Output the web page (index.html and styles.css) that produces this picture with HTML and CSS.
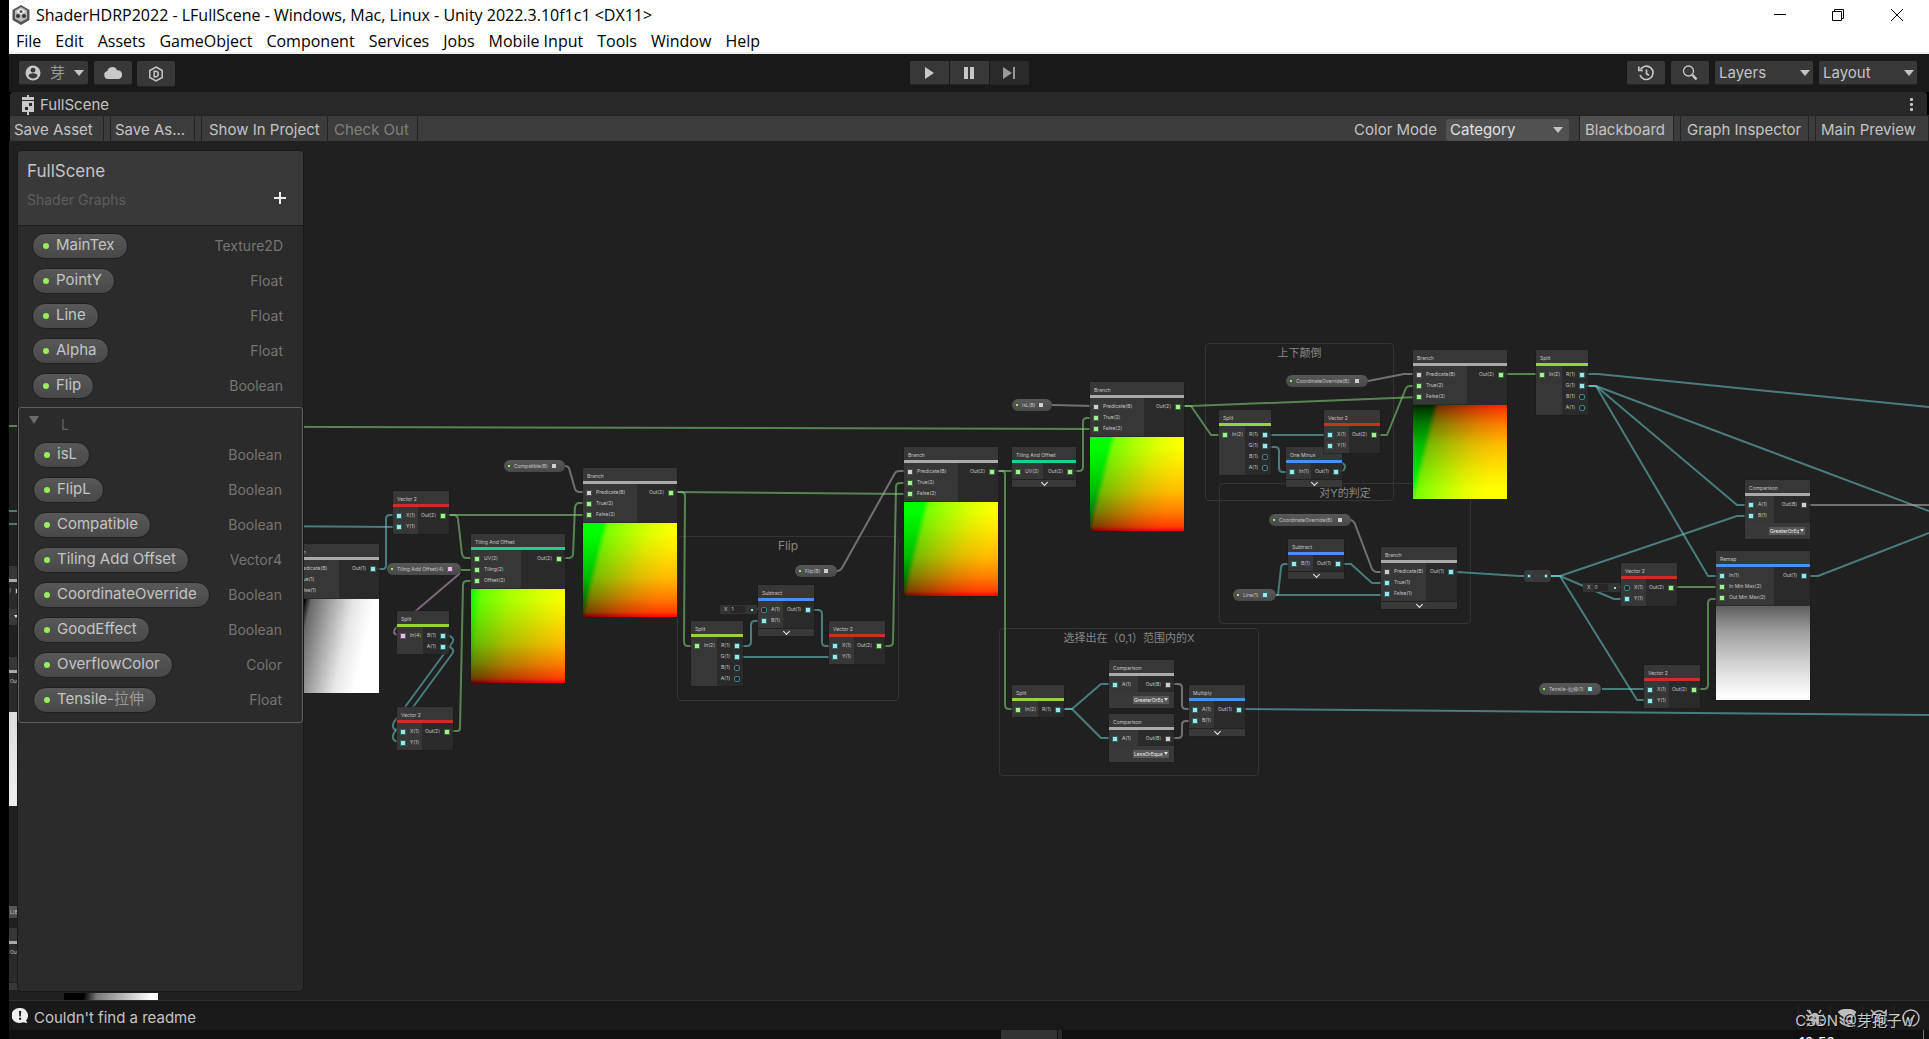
FILE: index.html
```html
<!DOCTYPE html>
<html lang="en">
<head>
<meta charset="utf-8">
<title>ShaderHDRP2022 - LFullScene - Unity</title>
<link rel="stylesheet" href="styles.css">
</head>
<body>
<header class="titlebar">
  <svg class="app-icon" viewBox="0 0 18 20"><path d="M9 0l8.500 5v10L9 20 .5 15V5z" fill="#555"/><path d="M9 2l6 3.500v8L9 17l-6-3.500v-8z" fill="#bbb"/><path d="M9 3.500l4.500 3L9 9.200 4.500 6.500z" fill="#f4f4f4"/><circle cx="6" cy="11" r="2" fill="#333"/><circle cx="12" cy="11" r="2" fill="#333"/><circle cx="9" cy="6.500" r="1.500" fill="#555"/></svg>
  <h1>ShaderHDRP2022 - LFullScene - Windows, Mac, Linux - Unity 2022.3.10f1c1 &lt;DX11&gt;</h1>
  <div class="window-buttons">
    <button aria-label="Minimize"><svg viewBox="0 0 12 12"><path d="M0 5.500h12"/></svg></button>
    <button aria-label="Restore"><svg viewBox="0 0 12 12"><path d="M.5 2.500h9v9h-9zM2.500 2.500v-2h9v9h-2"/></svg></button>
    <button aria-label="Close"><svg viewBox="0 0 12 12"><path d="M0 0l12 12M12 0L0 12"/></svg></button>
  </div>
</header>
<nav class="menubar">
  <button>File</button><button>Edit</button><button>Assets</button><button>GameObject</button><button>Component</button><button>Services</button><button>Jobs</button><button>Mobile Input</button><button>Tools</button><button>Window</button><button>Help</button>
</nav>

<div class="main-toolbar">
  <div class="tools">
    <button class="tool account"><svg class="ico" viewBox="0 0 16 16"><circle cx="8" cy="8" r="7.500" fill="#c8c8c8"/><circle cx="8" cy="5.200" r="2.400" fill="#383838"/><path d="M3.500 11c0-2 2-2.800 4.500-2.800s4.500.8 4.500 2.800c-1 1.500-2.600 2.400-4.500 2.400S4.500 12.500 3.500 11z" fill="#383838"/></svg><span>芽</span><i class="caret"></i></button>
    <button class="tool icon-tool" aria-label="Cloud"><svg class="cloud" viewBox="0 0 18 13"><path d="M4 13a4 4 0 0 1-.6-7.900A5 5 0 0 1 13 4.200 4.400 4.400 0 0 1 14.500 13z" fill="#c8c8c8"/></svg></button>
    <button class="tool icon-tool tall" aria-label="Version control"><svg class="ico" viewBox="0 0 16 16" fill="none" stroke="#c8c8c8" stroke-width="1.500"><path d="M8 1l6.200 3.500v7L8 15l-6.200-3.500v-7z"/><path d="M6.200 5.200h1.600c3.300 0 3.300 5.600 0 5.600H6.200z"/></svg></button>
  </div>
  <div class="play-tools">
    <button aria-label="Play"><svg viewBox="0 0 12 12"><path d="M2 0l9 6-9 6z"/></svg></button>
    <button aria-label="Pause"><svg viewBox="0 0 12 12"><path d="M1 0h4v12H1zM7 0h4v12H7z"/></svg></button>
    <button aria-label="Step" class="dim"><svg viewBox="0 0 12 12"><path d="M0 0l9 6-9 6zM10 0h2v12h-2z"/></svg></button>
  </div>
  <div class="tools right">
    <button class="tool icon-tool" aria-label="Undo history"><svg class="ico" viewBox="0 0 16 16" fill="none" stroke="#c8c8c8" stroke-width="1.600"><path d="M2.500 4.500A6.700 6.700 0 1 1 2 10"/><path d="M.8 1.500v4h4M8.500 4.500v4.200l2.500 1.500"/></svg></button>
    <button class="tool icon-tool" aria-label="Search"><svg class="ico" viewBox="0 0 16 16" fill="none" stroke="#c8c8c8" stroke-width="1.300"><circle cx="6.500" cy="6" r="5"/><path d="M10.500 10l4 4.500" stroke-width="2.600"/></svg></button>
    <span class="select"><select aria-label="Layers"><option>Layers</option></select></span>
    <span class="select"><select aria-label="Layout"><option>Layout</option></select></span>
  </div>
</div>

<div class="tabbar">
  <svg class="tab-icon" viewBox="0 0 14 20"><path d="M6 0h2v2h5v3H1V2h5zM1 6h12v11H8v3H6v-3H1z" fill="#c8c8c8"/><path d="M8 8h3v3H8zM4 12h3v3H4z" fill="#282828"/></svg>
  <h2>FullScene</h2>
  <button class="kebab" aria-label="Tab options"><i></i><i></i><i></i></button>
</div>

<div class="graph-toolbar">
  <button class="save">Save Asset</button><i class="spacer"></i><button class="save-as">Save As...</button><i class="spacer"></i><button class="show">Show In Project</button><button class="checkout" disabled>Check Out</button>
  <div class="graph-right">
    <label for="mode">Color Mode</label>
    <span class="select mode"><select id="mode"><option>Category</option></select></span>
    <button class="on">Blackboard</button><i class="spacer"></i><button class="inspector">Graph Inspector</button><i class="spacer"></i><button class="main-preview">Main Preview</button>
  </div>
</div>

<main class="canvas">
<div class="stage">
  <section class="group g-flip"><h3>Flip</h3></section>
  <section class="group g-updown"><h3>上下颠倒</h3></section>
  <section class="group g-judge"><h3>对Y的判定</h3></section>
  <section class="group g-range"><h3>选择出在（0,1）范围内的X</h3></section>

  <svg class="wires" width="1929" height="1039">
    <g class="w-green">
      <path d="M9 426L1096 429"/>
      <path d="M443 515H589"/>
      <path d="M449 515H454Q457 515 458 519L462 554Q463 558 466 558H477"/>
      <path d="M461 570H477"/>
      <path d="M448 731H457Q460 731 460 728L463 585Q463 581 467 581H477"/>
      <path d="M559 558H569Q572 558 573 555L575 507Q576 503 579 503H589"/>
      <path d="M672 492L909 494"/>
      <path d="M677 492H681Q685 492 685 496L684 642Q684 646 688 646H697"/>
      <path d="M879 646H889Q893 646 893 642L896 487Q896 483 900 483H909"/>
      <path d="M992 471H1018"/>
      <path d="M998 471H1002Q1005 471 1005 475V705Q1005 709 1009 709H1018"/>
      <path d="M1070 471H1079Q1083 471 1083 467V422Q1083 418 1087 418H1096"/>
      <path d="M1178 406H1191L1419 397"/>
      <path d="M1184 406H1191L1211 435H1225"/>
      <path d="M1375 435H1387L1406 388Q1407 386 1410 386H1419"/>
      <path d="M1501 374H1542"/>
      <path d="M1672 587H1722"/>
      <path d="M1694 689H1704Q1708 689 1708 685V603Q1708 599 1712 599H1722"/>
    </g>
    <g class="w-teal">
      <path d="M9 511H30M9 524L399 527"/>
      <path d="M373 569H383Q386 569 386 565V519Q386 515 390 515H399"/>
      <path d="M443 635C452 635 455 639 452 643L394 722C391 728 394 731 402 731"/>
      <path d="M443 646C452 646 455 650 452 654L394 733C391 739 394 742 402 742"/>
      <path d="M738 646H747Q751 646 751 642V625Q751 621 755 621H764"/>
      <path d="M738 657H835"/>
      <path d="M751 609H764"/>
      <path d="M808 610H818Q822 610 822 614V642Q822 646 826 646H835"/>
      <path d="M1265 435H1330"/>
      <path d="M1265 447H1275Q1279 447 1279 451V468Q1279 472 1283 472H1292"/>
      <path d="M1337 472C1346 472 1347 465 1342 463L1325 453C1320 450 1322 447 1330 447"/>
      <path d="M1583 374H1598L1929 407"/>
      <path d="M1583 386H1596L1929 511"/>
      <path d="M1583 386H1596L1737 505H1751"/>
      <path d="M1583 386H1596L1708 576H1722"/>
      <path d="M1276 595H1387"/>
      <path d="M1276 595H1278L1281 568Q1281 564 1285 564H1294"/>
      <path d="M1338 564H1351L1372 583H1387"/>
      <path d="M1451 572H1457L1520 576H1529"/>
      <path d="M1546 576H1560L1737 516H1751"/>
      <path d="M1546 576H1560L1614 599H1627"/>
      <path d="M1546 576H1560L1637 700H1649"/>
      <path d="M1614 587H1627"/>
      <path d="M1602 689H1650"/>
      <path d="M1804 576H1818L1929 533"/>
      <path d="M1239 709L1929 715"/>
      <path d="M1058 709H1072L1101 684H1115"/>
      <path d="M1058 709H1072L1101 738H1115"/>
    </g>
    <g class="w-grey">
      <path d="M565 466Q568 466 569 468L575 489Q576 492 580 492H589"/>
      <path d="M837 571Q840 571 842 568L895 473Q896 471 900 471H909"/>
      <path d="M1052 405L1095 406"/>
      <path d="M1368 381L1404 374H1419"/>
      <path d="M1350 520Q1353 520 1355 524L1372 569Q1374 572 1377 572H1387"/>
      <path d="M1804 505H1929"/>
      <path d="M1168 684H1178Q1182 684 1182 688V705Q1182 709 1186 709H1195"/>
      <path d="M1168 738H1178Q1182 738 1182 734V725Q1182 721 1186 721H1195"/>
    </g>
    <g class="w-pink"><path d="M455 569Q462 571 458 575L398 626Q392 631 395 634Q397 635 402 635"/></g>
  </svg>

  <article class="node compare n0 grey"><h4></h4><div class="ports"><ul class="in"></ul><ul class="out"><li class="b">3)</li><li></li></ul></div><div class="enum"></div></article>
  <article class="node branch n1 grey"><h4></h4><div class="ports"><ul class="in"></ul><ul class="out"><li class="t">Out(1)</li><li></li><li></li></ul></div><div class="preview mono"></div></article>
  <div class="pill p0"><span class="b">L(B)</span></div>
  <article class="node branch n2 grey"><h4></h4><div class="ports"><ul class="in"></ul><ul class="out"><li class="t">Out(1)</li><li></li><li></li></ul></div><div class="fold"></div></article>
  <div class="preview stray"></div>

  <article class="node branch n3 grey"><h4>Branch</h4><div class="ports"><ul class="in"><li class="b">Predicate(B)</li><li class="t">True(1)</li><li class="t">False(1)</li></ul><ul class="out"><li class="t">Out(1)</li></ul></div><div class="preview mono"></div></article>
  <article class="node vec n4 red"><h4>Vector 2</h4><div class="ports"><ul class="in"><li class="t">X(1)</li><li class="t">Y(1)</li></ul><ul class="out"><li class="v">Out(2)</li></ul></div></article>
  <article class="node tiling n5 mint"><h4>Tiling And Offset</h4><div class="ports"><ul class="in"><li class="v">UV(2)</li><li class="v">Tiling(2)</li><li class="v">Offset(2)</li></ul><ul class="out"><li class="v">Out(2)</li></ul></div><div class="preview uv-soft"></div></article>
  <article class="node branch n6 grey"><h4>Branch</h4><div class="ports"><ul class="in"><li class="b">Predicate(B)</li><li class="v">True(2)</li><li class="v">False(2)</li></ul><ul class="out"><li class="v">Out(2)</li></ul></div><div class="preview uv"></div></article>
  <article class="node split n7 lime"><h4>Split</h4><div class="ports"><ul class="in"><li class="p">In(4)</li></ul><ul class="out"><li class="t">B(1)</li><li class="t">A(1)</li></ul></div></article>
  <article class="node vec n8 red"><h4>Vector 2</h4><div class="ports"><ul class="in"><li class="t">X(1)</li><li class="t">Y(1)</li></ul><ul class="out"><li class="v">Out(2)</li></ul></div></article>
  <div class="pill p1"><span class="b">Compatible(B)</span></div>
  <div class="pill p2"><span class="p">Tiling Add Offset(4)</span></div>

  <article class="node split n9 lime"><h4>Split</h4><div class="ports"><ul class="in"><li class="v">In(2)</li></ul><ul class="out"><li class="t">R(1)</li><li class="t">G(1)</li><li class="t open">B(1)</li><li class="t open">A(1)</li></ul></div></article>
  <article class="node vec n10 blue"><h4>Subtract</h4><div class="ports"><ul class="in"><li class="t open">A(1)</li><li class="t">B(1)</li></ul><ul class="out"><li class="t">Out(1)</li></ul></div><div class="fold"></div></article>
  <label class="slot s1">X <input value="1"></label>
  <article class="node vec n11 red"><h4>Vector 2</h4><div class="ports"><ul class="in"><li class="t">X(1)</li><li class="t">Y(1)</li></ul><ul class="out"><li class="v">Out(2)</li></ul></div></article>
  <div class="pill p3"><span class="b">Flip(B)</span></div>
  <article class="node branch n12 grey"><h4>Branch</h4><div class="ports"><ul class="in"><li class="b">Predicate(B)</li><li class="v">True(2)</li><li class="v">False(2)</li></ul><ul class="out"><li class="v">Out(2)</li></ul></div><div class="preview uv"></div></article>

  <article class="node tiling-s n13 mint"><h4>Tiling And Offset</h4><div class="ports"><ul class="in"><li class="v">UV(2)</li></ul><ul class="out"><li class="v">Out(2)</li></ul></div><div class="fold"></div></article>
  <div class="pill p4"><span class="b">isL(B)</span></div>
  <article class="node branch n14 grey"><h4>Branch</h4><div class="ports"><ul class="in"><li class="b">Predicate(B)</li><li class="v">True(2)</li><li class="v">False(2)</li></ul><ul class="out"><li class="v">Out(2)</li></ul></div><div class="preview uv"></div></article>

  <div class="pill p5"><span class="b">CoordinateOverride(B)</span></div>
  <article class="node split n15 lime"><h4>Split</h4><div class="ports"><ul class="in"><li class="v">In(2)</li></ul><ul class="out"><li class="t">R(1)</li><li class="t">G(1)</li><li class="t open">B(1)</li><li class="t open">A(1)</li></ul></div></article>
  <article class="node vec n16 blue"><h4>One Minus</h4><div class="ports"><ul class="in"><li class="t">In(1)</li></ul><ul class="out"><li class="t">Out(1)</li></ul></div><div class="fold"></div></article>
  <article class="node vec n17 red"><h4>Vector 2</h4><div class="ports"><ul class="in"><li class="t">X(1)</li><li class="t">Y(1)</li></ul><ul class="out"><li class="v">Out(2)</li></ul></div></article>
  <article class="node branch n18 grey"><h4>Branch</h4><div class="ports"><ul class="in"><li class="b">Predicate(B)</li><li class="v">True(2)</li><li class="v">False(2)</li></ul><ul class="out"><li class="v">Out(2)</li></ul></div><div class="preview uv-down"></div></article>
  <article class="node split n19 lime"><h4>Split</h4><div class="ports"><ul class="in"><li class="v">In(2)</li></ul><ul class="out"><li class="t">R(1)</li><li class="t">G(1)</li><li class="t open">B(1)</li><li class="t open">A(1)</li></ul></div></article>

  <div class="pill p6"><span class="b">CoordinateOverride(B)</span></div>
  <article class="node vec n20 blue"><h4>Subtract</h4><div class="ports"><ul class="in"><li class="t">B(1)</li></ul><ul class="out"><li class="t">Out(1)</li></ul></div><div class="fold"></div></article>
  <div class="pill p7"><span class="t">Line(1)</span></div>
  <article class="node branch-s n21 grey"><h4>Branch</h4><div class="ports"><ul class="in"><li class="b">Predicate(B)</li><li class="t">True(1)</li><li class="t">False(1)</li></ul><ul class="out"><li class="t">Out(1)</li></ul></div><div class="fold"></div></article>
  <div class="redirect t"><i></i><i></i></div>

  <article class="node split n22 lime"><h4>Split</h4><div class="ports"><ul class="in"><li class="v">In(2)</li></ul><ul class="out"><li class="t">R(1)</li></ul></div></article>
  <article class="node compare n23 grey"><h4>Comparison</h4><div class="ports"><ul class="in"><li class="t">A(1)</li></ul><ul class="out"><li class="b">Out(B)</li></ul></div><div class="enum"><select aria-label="Operator"><option>GreaterOrEqual</option></select></div></article>
  <article class="node compare n24 grey"><h4>Comparison</h4><div class="ports"><ul class="in"><li class="t">A(1)</li></ul><ul class="out"><li class="b">Out(B)</li></ul></div><div class="enum"><select aria-label="Operator"><option>LessOrEqual</option></select></div></article>
  <article class="node vec n25 blue"><h4>Multiply</h4><div class="ports"><ul class="in"><li class="t">A(1)</li><li class="t">B(1)</li></ul><ul class="out"><li class="t">Out(1)</li></ul></div><div class="fold"></div></article>

  <label class="slot s2">X <input value="0"></label>
  <article class="node vec n26 red"><h4>Vector 2</h4><div class="ports"><ul class="in"><li class="t open">X(1)</li><li class="t">Y(1)</li></ul><ul class="out"><li class="v">Out(2)</li></ul></div></article>
  <article class="node compare n27 grey"><h4>Comparison</h4><div class="ports"><ul class="in"><li class="t">A(1)</li><li class="t">B(1)</li></ul><ul class="out"><li class="b">Out(B)</li></ul></div><div class="enum"><select aria-label="Operator"><option>GreaterOrEqual</option></select></div></article>
  <article class="node remap n28 blue"><h4>Remap</h4><div class="ports"><ul class="in"><li class="t">In(1)</li><li class="v">In Min Max(2)</li><li class="v">Out Min Max(2)</li></ul><ul class="out"><li class="t">Out(1)</li></ul></div><div class="preview ramp"></div></article>
  <article class="node vec n29 red"><h4>Vector 2</h4><div class="ports"><ul class="in"><li class="t">X(1)</li><li class="t">Y(1)</li></ul><ul class="out"><li class="v">Out(2)</li></ul></div></article>
  <div class="pill p8"><span class="t">Tensile-拉伸(1)</span></div>
</div>

<aside class="blackboard">
  <header><h2>FullScene</h2><div class="sub"><p>Shader Graphs</p><button aria-label="Add property"><svg viewBox="0 0 12 12"><path d="M6 0v12M0 6h12"/></svg></button></div></header>
  <ul class="props">
    <li><span class="prop">MainTex</span><em>Texture2D</em></li>
    <li><span class="prop">PointY</span><em>Float</em></li>
    <li><span class="prop">Line</span><em>Float</em></li>
    <li><span class="prop">Alpha</span><em>Float</em></li>
    <li><span class="prop">Flip</span><em>Boolean</em></li>
  </ul>
  <section class="category">
    <h3><i class="caret"></i>L</h3>
    <ul class="props">
      <li><span class="prop">isL</span><em>Boolean</em></li>
      <li><span class="prop">FlipL</span><em>Boolean</em></li>
      <li><span class="prop">Compatible</span><em>Boolean</em></li>
      <li><span class="prop">Tiling Add Offset</span><em>Vector4</em></li>
      <li><span class="prop">CoordinateOverride</span><em>Boolean</em></li>
      <li><span class="prop">GoodEffect</span><em>Boolean</em></li>
      <li><span class="prop">OverflowColor</span><em>Color</em></li>
      <li><span class="prop">Tensile-<b>拉伸</b></span><em>Float</em></li>
    </ul>
  </section>
</aside>
</main>

<footer class="status">
  <svg class="note" viewBox="0 0 16 16"><path d="M8 0a8 7.500 0 0 1 6 12.400L15.500 15 11 14.200A8 7.500 0 1 1 8 0z" fill="#f0f0f0"/><path d="M7 3h2.200L8.800 8.500H7.400zM7 9.800h2.200v2H7z" fill="#191919"/></svg>
  <p>Couldn't find a readme</p>
  <div class="status-icons">
    <button aria-label="Debug mode"><svg viewBox="0 0 18 18" fill="none" stroke="#bdbdbd" stroke-width="1.400"><ellipse cx="9" cy="10" rx="4" ry="5.500" fill="#bdbdbd"/><path d="M5 4l-2-3M13 4l2-3M4 8L0 6M14 8l4-2M4 11H0M14 11h4M4 14l-3 3M14 14l3 3M1 1l16 16"/></svg></button>
    <button aria-label="Cache server"><svg viewBox="0 0 18 18" fill="none" stroke="#bdbdbd" stroke-width="2"><path d="M1 3c4-3 12-3 16 0-1 4-3 5-6 5-5 0-8-2-10-5z" fill="#bdbdbd"/><path d="M2 8c1 4 9 5 13 3M2 12c2 4 8 5 11 3M12 12l5 5"/></svg></button>
    <button aria-label="Auto generate lighting"><svg viewBox="0 0 18 18" fill="none" stroke="#bdbdbd" stroke-width="1.600"><path d="M2 9a7 7 0 0 1 12-5l2-2v5h-5M16 9a7 7 0 0 1-12 5M1 1l16 16"/><circle cx="9" cy="9" r="3.500" fill="#8a8a8a"/></svg></button>
    <button aria-label="Background tasks"><svg viewBox="0 0 18 18" fill="none" stroke="#bdbdbd" stroke-width="1.400"><circle cx="9" cy="9" r="8"/><path d="M5.500 9.500l2.500 2.500 4.500-6"/></svg></button>
  </div>
  <span class="watermark">CSDN @芽孢子w</span>
</footer>
<div class="taskbar"><i class="task"></i><i class="task more"></i><time>10:50</time><i class="edge"></i></div>
</body>
</html>
```

FILE: styles.css
```css
* { box-sizing: border-box; margin: 0; padding: 0; }
body {
  display: flex; flex-direction: column; height: 100vh; padding-left: 9px; overflow: hidden;
  background: #000; color: #c4c4c4;
  font: 15px/18px Inter, "Noto Sans CJK SC", sans-serif;
}
button, select, input { font: inherit; color: inherit; background: none; border: 0; }
button { white-space: nowrap; }
h1, h2, h3, h4, em, b { font-weight: 400; font-style: normal; font-size: inherit; }
ul { list-style: none; }
svg { display: block; }
.caret { display: block; border: 5px solid transparent; border-top: 6px solid #c4c4c4; border-bottom: 0; }

/* window chrome */
.titlebar { display: flex; align-items: center; height: 29px; background: #fff; color: #000; padding-left: 3px; font: 16px/20px "Open Sans", sans-serif; flex: none; }
.app-icon { width: 18px; height: 20px; margin-right: 6px; }
.window-buttons { margin-left: auto; display: flex; }
.window-buttons button { width: 58px; height: 28px; display: grid; place-items: center; }
.window-buttons button:last-child { width: 60px; margin-right: 2px; }
.window-buttons svg { width: 12px; height: 12px; fill: none; stroke: #000; }
.menubar { display: flex; gap: 14px; height: 25px; padding: 0 7px; background: #fff; border-bottom: 2px solid #eceef0; color: #000; font: 16px/24px "Open Sans", sans-serif; flex: none; }

/* editor toolbar */
.main-toolbar { display: grid; grid-template-columns: 1fr auto 1fr; height: 38px; padding: 7px 12px 0 10px; background: #191919; flex: none; }
.tools { display: flex; gap: 6px; align-items: flex-start; }
.tools.right { justify-content: flex-end; }
.tool, .main-toolbar .select { height: 24px; background: #383838; border-radius: 2px; border-bottom: 1px solid #242424; }
.account { width: 69px; display: flex; align-items: center; padding: 0 4px 0 6px; }
.account span { margin: 0 auto; color: #999; }
.ico { width: 16px; height: 16px; }
.icon-tool { width: 38px; display: grid; place-items: center; }
.icon-tool.tall { height: 26px; margin-left: -1px; }
.cloud { width: 18px; height: 13px; }
.play-tools { display: flex; gap: 1px; margin-left: 2px; }
.play-tools button { width: 39px; height: 24px; background: #383838; display: grid; place-items: center; border-bottom: 1px solid #242424; }
.play-tools svg { width: 12px; height: 12px; fill: #c8c8c8; }
.play-tools .dim { background: #2a2a2a; }
.play-tools .dim svg { fill: #999; }
.select { position: relative; display: block; width: 98px; }
.select select { appearance: none; width: 100%; height: 100%; padding-left: 4px; }
.select::after { content: ""; position: absolute; right: 3px; top: 9px; border: 5px solid transparent; border-top: 6px solid #c4c4c4; border-bottom: 0; pointer-events: none; }

.tabbar { display: flex; align-items: center; height: 23px; margin: 0 2px 0 1px; padding: 2px 14px 0 11px; background: #282828; border-radius: 4px 4px 0 0; flex: none; }
.tab-icon { width: 14px; height: 20px; margin-right: 5px; }
.kebab { margin-left: auto; display: grid; gap: 2px; }
.kebab i { width: 3px; height: 3px; background: #c4c4c4; border-radius: 1px; }

.graph-toolbar { display: flex; height: 26px; margin-left: 1px; background: #3c3c3c; border-top: 1px solid #232323; white-space: nowrap; flex: none; }
.graph-toolbar button { padding: 2px 0 0 4px; border-right: 1px solid #232323; text-align: left; }
.graph-toolbar .save { width: 94px; }
.graph-toolbar .save-as { width: 84px; }
.graph-toolbar .show { width: 126px; padding-left: 7px; }
.graph-toolbar .checkout { width: 90px; padding-left: 6px; color: #808080; }
.graph-toolbar .spacer { width: 7px; border-right: 1px solid #232323; }
.graph-right { margin-left: auto; display: flex; }
.graph-right label { align-self: center; padding: 3px 9px 0 0; }
.select.mode { width: 123px; margin: 3px 10px 0 0; background: #515151; border-radius: 3px; color: #e0e0e0; }
.select.mode::after { top: 8px; right: 6px; }
.graph-toolbar .on { width: 95px; padding-left: 5px; background: #505050; border-left: 1px solid #232323; }
.graph-toolbar .inspector { width: 128px; padding-left: 6px; }
.graph-toolbar .main-preview { width: 113px; padding-left: 5px; }

/* graph canvas */
.canvas { position: relative; flex: 1; overflow: hidden; background: #202020; border-bottom: 1px solid #303030; min-height: 0; }
.stage { position: absolute; left: -9px; top: -141px; width: 1929px; height: 1039px; font: 5px/11px Inter, "Noto Sans CJK SC", sans-serif; color: #c6c6c6; }
.wires { position: absolute; left: 0; top: 0; }
.wires path { fill: none; stroke-width: 2; stroke-linejoin: round; }
.w-green path { stroke: #7dc974; stroke-opacity: .6; }
.w-teal path { stroke: #6cc8c9; stroke-opacity: .55; }
.w-grey path { stroke: #a9a9a9; stroke-opacity: .6; }
.w-pink path { stroke: #c9a4c9; stroke-opacity: .55; }

.group { position: absolute; border: 1px solid #343434; border-radius: 4px; text-align: center; color: #878787; }
.group h3 { font-size: 12px; line-height: 18px; }
.g-flip { left: 677px; top: 536px; width: 222px; height: 165px; }
.g-updown { left: 1205px; top: 343px; width: 189px; height: 158px; }
.g-judge { left: 1219px; top: 483px; width: 252px; height: 141px; }
.g-range { left: 999px; top: 628px; width: 260px; height: 148px; }
.g-updown h3, .g-judge h3, .g-range h3 { font-size: 11px; }

.node { position: absolute; --in: 25px; width: 56px; background: #2b2b2be0; outline: 1px solid #1a1a1a80; }
.node h4 { height: 16px; padding: 2px 4px 0; line-height: 12px; background: #393939e0; border-bottom: 3px solid #aaa; white-space: nowrap; }
.red h4 { border-color: #cc3022; }
.lime h4 { border-color: #97d33c; }
.mint h4 { border-color: #12d68d; }
.blue h4 { border-color: #4a90f0; }
.ports { display: grid; grid-template-columns: var(--in) 1fr; white-space: nowrap; }
.ports ul { padding: 3px 0 2px; }
.ports .in { background: #393939e0; padding-left: 3px; }
.ports .out { padding-right: 3px; }
.ports li { display: flex; align-items: center; gap: 4px; height: 11px; }
.ports .out li { flex-direction: row-reverse; }
.ports li::before, .pill span::after, .redirect i { content: ""; width: 4px; height: 4px; border: 1px solid var(--c); border-radius: 1px; background: var(--hot); flex: none; }
.ports li:empty::before { display: none; }
.t { --c: #2f6364; --hot: #9be6e8; }
.v { --c: #3b6a37; --hot: #a5ee98; }
.b { --c: #4c4c4c; --hot: #cfcfcf; }
.p { --c: #6d526d; --hot: #e6bfe6; }
.ports .open::before { background: #222; border-color: #3d8587; border-radius: 2px; }
.branch { width: 94px; --in: 54px; }
.branch-s { width: 76px; --in: 45px; }
.tiling { width: 94px; --in: 50px; }
.tiling-s { width: 64px; --in: 31px; }
.remap { width: 94px; --in: 58px; }
.split { width: 52px; --in: 26px; }
.compare { width: 65px; --in: 29px; }
.fold { height: 8px; border-top: 1px solid #222; background: #393939; display: grid; place-items: center; }
.fold::after { content: ""; width: 4px; height: 4px; margin-top: -2px; border: solid #eee; border-width: 0 1px 1px 0; transform: rotate(45deg); }
.enum { height: 16px; padding: 4px 5px 4px 24px; background: #393939; position: relative; }
.enum select { appearance: none; display: block; width: 36px; height: 8px; padding: 0 6px 0 1px; background: #585858; color: #eee; line-height: 8px; overflow: hidden; }
.enum::after { content: ""; position: absolute; right: 6px; top: 6px; border: 2px solid transparent; border-top: 3px solid #ddd; border-bottom: 0; }
.preview { height: 94px; margin-top: 1px; }
.uv { background: linear-gradient(104deg, #000 17%, #700 22%, #a80000 38%, #e00000 60%, #f00 80%), linear-gradient(to top, #000, #003f00 5%, #007c00 20%, #0b0 42%, #00e600 70%, #0f0 90%); background-blend-mode: screen; }
.uv-soft { background: linear-gradient(96deg, #000 0%, #600 10%, #a80000 38%, #e00000 72%, #f00 95%), linear-gradient(to top, #000, #003f00 5%, #007c00 20%, #0b0 42%, #00e600 70%, #0f0 90%); background-blend-mode: screen; }
.uv-down { background: linear-gradient(104deg, #000 17%, #700 22%, #a80000 38%, #e00000 60%, #f00 80%), linear-gradient(to bottom, #002000, #003f00 5%, #007c00 20%, #0b0 42%, #00e600 70%, #0f0 90%); background-blend-mode: screen; }
.mono { background: linear-gradient(103deg, #000 17%, #686868 23%, #a4a4a4 40%, #e6e6e6 60%, #fff 78%); }
.ramp { background: linear-gradient(#5e5e5e, #a0a0a0 28%, #d4d4d4 62%, #fff 96%); }
.stray { position: absolute; left: 64px; top: 992px; width: 94px; background: linear-gradient(100deg, #000 18%, #777 30%, #fff 80%); }
.n1 .mono { background: linear-gradient(#ddd, #eee); }

.pill { position: absolute; display: flex; align-items: center; height: 12px; padding: 0 8px 0 4px; gap: 4px; border-radius: 6px; background: linear-gradient(#585858, #484848); white-space: nowrap; }
.pill::before { content: ""; width: 2px; height: 2px; background: #96ee5a; flex: none; }
.pill span { display: flex; flex: 1; align-items: center; justify-content: space-between; }
.redirect { position: absolute; left: 1524px; top: 570px; width: 27px; height: 12px; padding: 0 3px; border-radius: 4px; background: #393939; display: flex; align-items: center; justify-content: space-between; }
.slot { position: absolute; width: 37px; height: 9px; padding: 1px 4px; background: #333; display: flex; align-items: center; gap: 4px; line-height: 7px; }
.slot input { width: 14px; height: 7px; background: #262626; }
.slot::after { content: ""; width: 2px; height: 2px; margin-left: auto; background: #8be0e0; }

.n0 { left: -41px; top: 566px; }
.n1 { left: -57px; top: 657px; }
.n2 { left: -57px; top: 928px; }
.n3 { left: 285px; top: 544px; }
.n4 { left: 393px; top: 491px; }
.n5 { left: 471px; top: 534px; }
.n6 { left: 583px; top: 468px; }
.n7 { left: 397px; top: 611px; }
.n8 { left: 397px; top: 707px; }
.n9 { left: 691px; top: 621px; }
.n10 { left: 758px; top: 585px; }
.n11 { left: 829px; top: 621px; }
.n12 { left: 904px; top: 447px; }
.n13 { left: 1012px; top: 447px; }
.n14 { left: 1090px; top: 382px; }
.n15 { left: 1219px; top: 410px; }
.n16 { left: 1286px; top: 447px; }
.n17 { left: 1324px; top: 410px; }
.n18 { left: 1413px; top: 350px; }
.n19 { left: 1536px; top: 350px; }
.n20 { left: 1288px; top: 539px; }
.n21 { left: 1381px; top: 547px; }
.n22 { left: 1012px; top: 685px; }
.n23 { left: 1109px; top: 660px; }
.n24 { left: 1109px; top: 714px; }
.n25 { left: 1189px; top: 685px; }
.n26 { left: 1621px; top: 563px; }
.n27 { left: 1745px; top: 480px; }
.n28 { left: 1716px; top: 551px; }
.n29 { left: 1644px; top: 665px; }
.p0 { left: 0; top: 906px; width: 30px; }
.p1 { left: 504px; top: 460px; width: 61px; }
.p2 { left: 387px; top: 563px; width: 74px; }
.p3 { left: 795px; top: 565px; width: 42px; }
.p4 { left: 1012px; top: 399px; width: 40px; }
.p5 { left: 1286px; top: 375px; width: 82px; }
.p6 { left: 1269px; top: 514px; width: 82px; }
.p7 { left: 1233px; top: 589px; width: 43px; }
.p8 { left: 1539px; top: 683px; width: 62px; }
.s1 { left: 720px; top: 605px; }
.s2 { left: 1583px; top: 583px; }

/* blackboard */
.blackboard { position: absolute; left: 8px; top: 9px; bottom: 8px; width: 287px; background: #2b2b2b; border: 1px solid #191919; border-radius: 5px; overflow: hidden; }
.blackboard header { height: 75px; padding: 10px 17px 0 9px; background: #393939; border-bottom: 1px solid #202020; }
.blackboard h2 { font-size: 17px; line-height: 20px; }
.sub { display: flex; justify-content: space-between; align-items: center; height: 38px; color: #5e5e5e; font-size: 14px; }
.sub svg { width: 12px; height: 12px; stroke: #eee; stroke-width: 2; margin-bottom: 4px; }
.blackboard > .props { padding: 2px 20px 0 14px; }
.props li { display: flex; align-items: center; justify-content: space-between; height: 35px; }
.props em { color: #757575; font-size: 14px; }
.prop { display: flex; align-items: center; height: 26px; padding: 0 12px 2px 10px; border: 1px solid #202020; border-radius: 13px; background: linear-gradient(#585858, #484848); line-height: 20px; }
.prop::before { content: ""; width: 6px; height: 6px; margin: 2px 7px 0 0; border-radius: 3px; background: #96ee5a; }
.prop b { color: #999; }
.category { margin-top: 4px; padding-bottom: 5px; border: 1px solid #606060; border-radius: 3px; }
.category h3 { display: flex; gap: 22px; height: 29px; padding: 8px 0 0 10px; color: #606060; font-size: 14px; }
.category h3 .caret { border-top-color: #6a6a6a; border-width: 8px 5px 0; height: 8px; }
.category .props { padding: 0 20px 0 14px; }

/* status bar */
.status { position: relative; display: flex; align-items: center; height: 29px; padding: 0 0 0 3px; background: #191919; flex: none; }
.status p { padding-top: 4px; }
.note { width: 16px; height: 16px; margin: 0 6px 0 0; }
.status-icons { margin: 4px 3px 0 auto; display: flex; }
.status-icons button { width: 32px; height: 24px; border-left: 1px solid #262626; display: grid; place-items: center; }
.status-icons svg { width: 18px; height: 18px; }
.watermark { position: absolute; right: 15px; top: 11px; color: #c8c8c8; text-shadow: 1px 1px 1px #000; }
.taskbar { display: flex; height: 9px; background: #101010; padding: 0 5px 0 992px; overflow: hidden; flex: none; }
.task { width: 56px; background: #333; margin-right: 1px; }
.task.more { width: 4px; background: #2a2a2a; }
.taskbar time { margin: 4px 88px 0 auto; color: #fff; font-size: 14px; }
.edge { width: 1px; background: #777; }
```
